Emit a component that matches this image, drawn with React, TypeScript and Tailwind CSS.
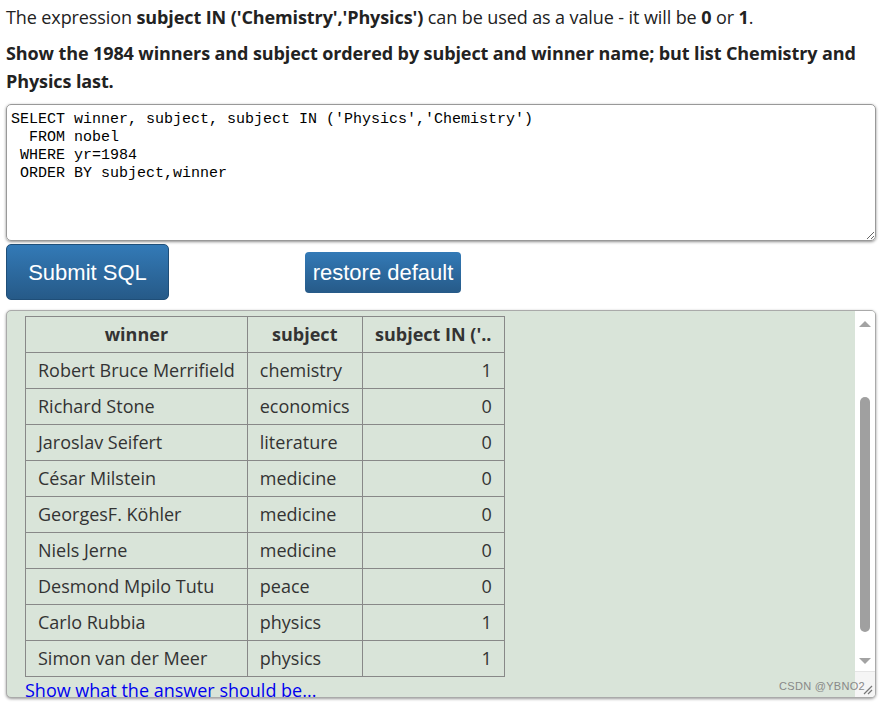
import React from "react";

const rows: [string, string, number][] = [
  ["Robert Bruce Merrifield", "chemistry", 1],
  ["Richard Stone", "economics", 0],
  ["Jaroslav Seifert", "literature", 0],
  ["César Milstein", "medicine", 0],
  ["GeorgesF. Köhler", "medicine", 0],
  ["Niels Jerne", "medicine", 0],
  ["Desmond Mpilo Tutu", "peace", 0],
  ["Carlo Rubbia", "physics", 1],
  ["Simon van der Meer", "physics", 1],
];

const sql = `SELECT winner, subject, subject IN ('Physics','Chemistry')
  FROM nobel
 WHERE yr=1984
 ORDER BY subject,winner`;

export default function App() {
  return (
    <div className="w-[885px] h-[705px] overflow-hidden bg-white text-[#222] font-['Open_Sans',sans-serif]">
      <div className="px-[6px]">
        <p className="text-[18px] leading-[24px] pt-[5px] tracking-[-0.1px]">
          The expression <b>subject IN ('Chemistry','Physics')</b> can be used as a value - it will be <b>0</b> or <b>1</b>.
        </p>
        <p className="text-[18px] leading-[28px] font-bold mt-[10px] tracking-[-0.1px] w-[860px]">
          Show the 1984 winners and subject ordered by subject and winner name; but list Chemistry and Physics last.
        </p>
        <textarea
          readOnly
          defaultValue={sql}
          className="mt-[9px] block w-[870px] h-[137px] rounded-[5px] border border-[#999] shadow-[0_1px_3px_rgba(0,0,0,0.45)] px-[4px] pt-[6px] pb-[4px] font-['Liberation_Mono',monospace] text-[15px] leading-[18px] text-black outline-none resize-y"
        />
        <div className="flex items-start mt-[3px]">
          <button className="w-[163px] h-[56px] rounded-[5px] border border-[#1f4e78] bg-gradient-to-b from-[#337ab7] to-[#265a88] text-white text-[22px] font-['Liberation_Sans',sans-serif]">
            Submit SQL
          </button>
          <button className="ml-[136px] mt-[8px] w-[156px] h-[41px] rounded-[4px] bg-gradient-to-b from-[#337ab7] to-[#265a88] text-white text-[22px] font-['Liberation_Sans',sans-serif]">
            restore default
          </button>
        </div>
        <div className="mt-[10px] w-[870px] h-[388px] rounded-[5px] border border-[#aaa] shadow-[0_1px_3px_rgba(0,0,0,0.4)] bg-[#d9e4d9] flex overflow-hidden relative">
          <div className="flex-1 overflow-hidden pl-[18px] pt-[5px]">
            <table className="border-collapse text-[18px] text-[#333]">
              <thead>
                <tr className="h-[36px]">
                  <th className="border border-[#888] w-[221px] font-bold text-center">winner</th>
                  <th className="border border-[#888] w-[115px] font-bold text-center">subject</th>
                  <th className="border border-[#888] w-[142px] font-bold text-center">subject IN ('..</th>
                </tr>
              </thead>
              <tbody>
                {rows.map(([w, s, v]) => (
                  <tr key={w} className="h-[36px]">
                    <td className="border border-[#888] px-[12px] whitespace-nowrap">{w}</td>
                    <td className="border border-[#888] px-[12px]">{s}</td>
                    <td className="border border-[#888] px-[12px] text-right">{v}</td>
                  </tr>
                ))}
              </tbody>
            </table>
            <div className="text-[18px] leading-[22px] text-[#0000ee] underline mt-[2px]">Show what the answer should be...</div>
          </div>
          <div className="w-[20px] bg-white flex flex-col items-center">
            <div className="h-[26px] flex items-center justify-center">
              <div className="w-0 h-0 border-l-[6px] border-r-[6px] border-b-[6px] border-l-transparent border-r-transparent border-b-[#a3a3a3]" />
            </div>
            <div className="h-[60px]" />
            <div className="w-[10px] h-[235px] rounded-[5px] bg-[#a0a0a0]" />
            <div className="h-[19px]" />
            <div className="h-[20px] flex items-center justify-center">
              <div className="w-0 h-0 border-l-[6px] border-r-[6px] border-t-[6px] border-l-transparent border-r-transparent border-t-[#a3a3a3]" />
            </div>
            <div className="flex-1 w-full border-t border-[#e5e5e5] bg-[#f5f5f5] flex items-end justify-end">
              <svg width="12" height="12" viewBox="0 0 12 12" className="mb-[2px] mr-[2px]">
                <path d="M11 3 L3 11 M11 7 L7 11" stroke="#777" strokeWidth="1.2" />
              </svg>
            </div>
          </div>
          <div className="absolute right-[10px] bottom-[3px] text-[11px] text-[#888] font-['Liberation_Sans',sans-serif] tracking-[0.3px]">
            CSDN @YBNO2
          </div>
        </div>
      </div>
    </div>
  );
}
